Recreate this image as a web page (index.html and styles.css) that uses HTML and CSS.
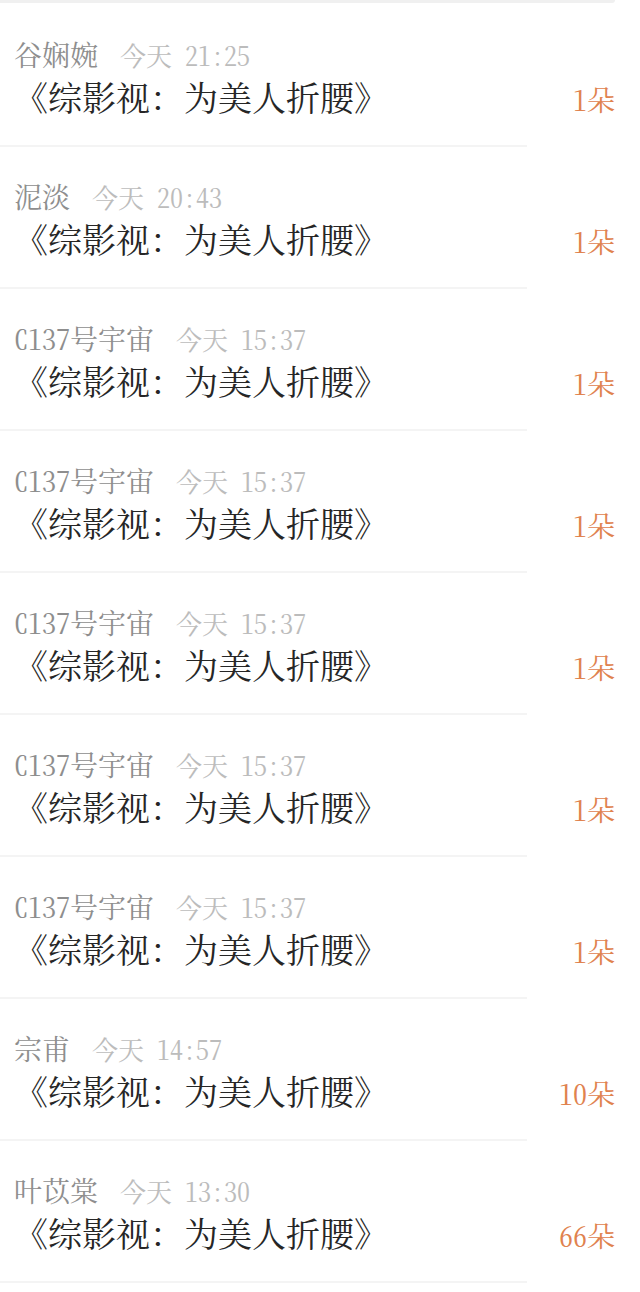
FILE: index.html
```html
<!DOCTYPE html>
<html lang="zh-CN">
<head>
<meta charset="UTF-8">
<meta name="viewport" content="width=device-width, initial-scale=1.0">
<title>送花记录</title>
<link rel="stylesheet" href="styles.css">
</head>
<body>

<div class="top-edge"></div>

<ul class="gift-list">
  <li class="gift-item">
    <div class="gift-meta"><span class="gift-name">谷娴婉</span><span class="gift-time">今天 21:25</span></div>
    <div class="gift-row"><span class="gift-book">《综影视：为美人折腰》</span><span class="gift-count">1朵</span></div>
  </li>
  <li class="gift-item">
    <div class="gift-meta"><span class="gift-name">泥淡</span><span class="gift-time">今天 20:43</span></div>
    <div class="gift-row"><span class="gift-book">《综影视：为美人折腰》</span><span class="gift-count">1朵</span></div>
  </li>
  <li class="gift-item">
    <div class="gift-meta"><span class="gift-name">C137号宇宙</span><span class="gift-time">今天 15:37</span></div>
    <div class="gift-row"><span class="gift-book">《综影视：为美人折腰》</span><span class="gift-count">1朵</span></div>
  </li>
  <li class="gift-item">
    <div class="gift-meta"><span class="gift-name">C137号宇宙</span><span class="gift-time">今天 15:37</span></div>
    <div class="gift-row"><span class="gift-book">《综影视：为美人折腰》</span><span class="gift-count">1朵</span></div>
  </li>
  <li class="gift-item">
    <div class="gift-meta"><span class="gift-name">C137号宇宙</span><span class="gift-time">今天 15:37</span></div>
    <div class="gift-row"><span class="gift-book">《综影视：为美人折腰》</span><span class="gift-count">1朵</span></div>
  </li>
  <li class="gift-item">
    <div class="gift-meta"><span class="gift-name">C137号宇宙</span><span class="gift-time">今天 15:37</span></div>
    <div class="gift-row"><span class="gift-book">《综影视：为美人折腰》</span><span class="gift-count">1朵</span></div>
  </li>
  <li class="gift-item">
    <div class="gift-meta"><span class="gift-name">C137号宇宙</span><span class="gift-time">今天 15:37</span></div>
    <div class="gift-row"><span class="gift-book">《综影视：为美人折腰》</span><span class="gift-count">1朵</span></div>
  </li>
  <li class="gift-item">
    <div class="gift-meta"><span class="gift-name">宗甫</span><span class="gift-time">今天 14:57</span></div>
    <div class="gift-row"><span class="gift-book">《综影视：为美人折腰》</span><span class="gift-count">10朵</span></div>
  </li>
  <li class="gift-item">
    <div class="gift-meta"><span class="gift-name">叶苡棠</span><span class="gift-time">今天 13:30</span></div>
    <div class="gift-row"><span class="gift-book">《综影视：为美人折腰》</span><span class="gift-count">66朵</span></div>
  </li>
</ul>

</body>
</html>
```

FILE: styles.css
```css
body {
  margin: 0;
  padding: 0;
  background-color: #fff;
  font-family: "Noto Serif CJK SC", "Liberation Serif", "Noto Sans CJK SC", serif;
  font-feature-settings: "hwid";
}

.top-edge {
  height: 3px;
  margin-bottom: 2px;
  width: 615px;
  background-color: #f0f0f0;
  border-bottom-right-radius: 12px;
}

.gift-list {
  list-style: none;
  margin: 0;
  padding: 0;
}

.gift-item {
  position: relative;
  height: 140px;
  padding: 33px 25px 0 14px;
  box-sizing: border-box;
  margin-bottom: 2px;
}

.gift-item::after {
  content: "";
  position: absolute;
  left: 0;
  bottom: -2px;
  width: 527px;
  height: 2px;
  background-color: #f4f4f4;
}

.gift-meta {
  display: flex;
  align-items: baseline;
  gap: 22px;
  height: 32px;
  line-height: 32px;
}

.gift-name {
  font-size: 28px;
  color: #8e8e8e;
}

.gift-time {
  font-size: 26px;
  color: #bcbcbc;
}

.gift-row {
  display: flex;
  justify-content: space-between;
  align-items: baseline;
  margin-top: 7px;
  line-height: 40px;
}

.gift-book {
  font-family: "Noto Serif CJK TC", "Noto Serif CJK SC", serif;
  font-feature-settings: normal;
  font-size: 34px;
  color: #262626;
}

.gift-count {
  font-size: 28px;
  color: #e0824e;
}
```
